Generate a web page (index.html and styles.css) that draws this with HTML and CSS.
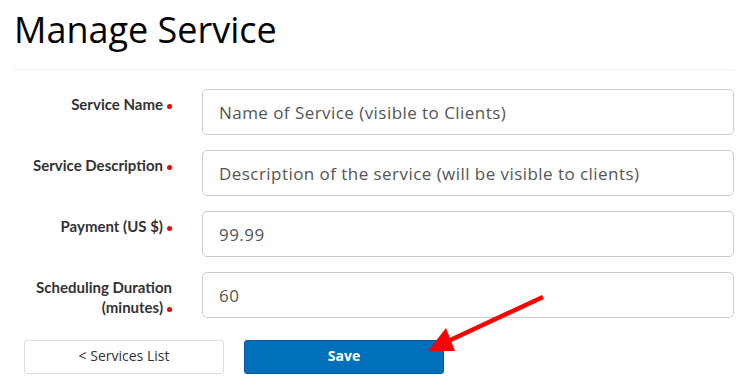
FILE: index.html
```html
<!DOCTYPE html>
<html lang="en">
<head>
    <meta charset="UTF-8">
    <meta name="viewport" content="width=device-width, initial-scale=1.0">
    <title>Manage Service</title>
    <link rel="stylesheet" href="styles.css">
</head>
<body>
    <div class="page">
        <h1>Manage Service</h1>
        <hr class="divider">
        <form class="service-form">
            <div class="form-row">
                <label for="name" class="required">Service Name</label>
                <input type="text" id="name" placeholder="Name of Service (visible to Clients)">
            </div>
            <div class="form-row">
                <label for="description" class="required">Service Description</label>
                <input type="text" id="description" placeholder="Description of the service (will be visible to clients)">
            </div>
            <div class="form-row">
                <label for="payment" class="required">Payment (US $)</label>
                <input type="text" id="payment" value="99.99">
            </div>
            <div class="form-row">
                <label for="duration" class="required">Scheduling Duration (minutes)</label>
                <input type="text" id="duration" value="60">
            </div>
            <div class="actions">
                <button type="button" class="btn btn-default">&lt; Services List</button>
                <button type="submit" class="btn btn-primary">Save</button>
            </div>
        </form>
        <svg class="pointer" width="755" height="389" viewBox="0 0 755 389">
            <line x1="543" y1="297" x2="444" y2="343" stroke="#ff0000" stroke-width="4.5"/>
            <polygon points="428,351 446,328 455,351" fill="#ff0000"/>
        </svg>
    </div>
</body>
</html>
```

FILE: styles.css
```css
body {
    margin: 0;
    background-color: #fff;
    font-family: Lato, "Open Sans", sans-serif;
    color: #333;
}

.page {
    position: relative;
    padding: 0 21px 0 14px;
}

h1 {
    margin: 0;
    padding-top: 6px;
    font-family: "Open Sans", sans-serif;
    font-weight: 400;
    font-size: 36px;
    line-height: 48px;
    color: #000;
}

.divider {
    margin: 15px 0 19px 0;
    border: none;
    border-top: 1px solid #eee;
}

.form-row {
    display: grid;
    grid-template-columns: 158px 1fr;
    column-gap: 30px;
    margin-bottom: 15px;
}

.form-row label {
    padding-top: 5px;
    text-align: right;
    font-weight: 700;
    font-size: 15px;
    line-height: 20px;
    color: #333;
}

.required::after {
    content: "";
    display: inline-block;
    width: 5px;
    height: 5px;
    margin-left: 4px;
    border-radius: 50%;
    background-color: #ff0000;
    vertical-align: middle;
}

.form-row input {
    height: 46px;
    box-sizing: border-box;
    padding: 0 16px;
    border: 1px solid #ccc;
    border-radius: 5px;
    font-family: "Open Sans", sans-serif;
    font-size: 17px;
    letter-spacing: 0.45px;
    color: #555;
}

.form-row input::placeholder {
    color: #555;
    opacity: 1;
}

.actions {
    display: flex;
    gap: 20px;
    padding: 7px 0 0 10px;
}

.btn {
    width: 200px;
    height: 34px;
    border-radius: 3px;
    font-family: "Open Sans", sans-serif;
    font-size: 14px;
    line-height: 18px;
    padding-bottom: 3px;
    cursor: pointer;
}

.btn-default {
    background-color: #fff;
    border: 1px solid #ddd;
    color: #333;
}

.btn-primary {
    background-color: #0070ba;
    border: 1px solid #005a9c;
    color: #fff;
    font-weight: 700;
}

.pointer {
    position: absolute;
    top: 0;
    left: 0;
    pointer-events: none;
}
```
